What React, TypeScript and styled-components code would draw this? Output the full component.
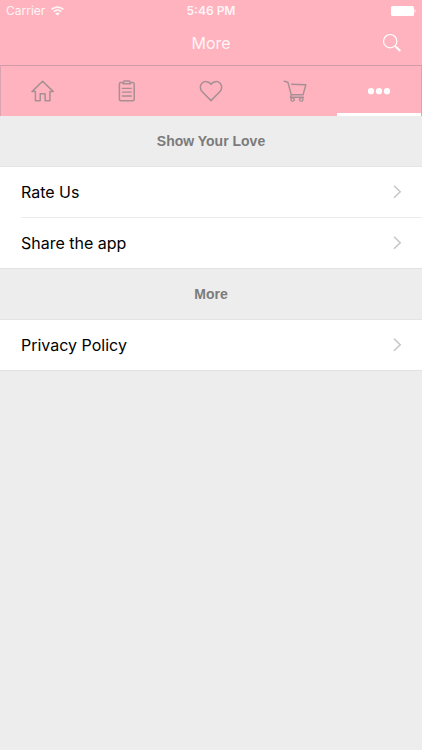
import React from "react";
import styled, { createGlobalStyle } from "styled-components";

const PINK = "#ffb3bf";
const PAGE = "#ededed";
const ICON = "#a78f94";

const GlobalStyle = createGlobalStyle`
  *, *::before, *::after { box-sizing: border-box; }
  body {
    margin: 0;
    background: ${PAGE};
    font-family: Inter, "Liberation Sans", sans-serif;
  }
`;

const Screen = styled.div`
  min-height: 100vh;
  background: ${PAGE};
`;

const StatusBar = styled.div`
  display: grid;
  grid-template-columns: 1fr auto 1fr;
  align-items: center;
  height: 22px;
  padding: 0 6px;
  background: ${PINK};
  color: #fff5f7;
  font-size: 12px;
  line-height: 16px;
`;

const Carrier = styled.span`
  display: flex;
  align-items: center;
  gap: 6px;
`;

const Clock = styled.time`
  font-weight: 600;
`;

const Battery = styled.span`
  display: flex;
  justify-content: flex-end;
`;

const TitleBar = styled.header`
  display: grid;
  grid-template-columns: 1fr auto 1fr;
  align-items: center;
  height: 43px;
  padding: 0 20px 2px;
  background: ${PINK};
`;

const Title = styled.h1`
  grid-column: 2;
  margin: 0;
  color: #fff5f7;
  font-size: 16px;
  line-height: 20px;
  font-weight: 400;
`;

const SearchButton = styled.button`
  justify-self: end;
  display: flex;
  padding: 0;
  border: 0;
  background: none;
  color: #fff;
  cursor: pointer;
`;

const Tabs = styled.nav`
  display: grid;
  grid-template-columns: repeat(5, 1fr);
  height: 51px;
  border: 1px solid #dda2af;
  border-top-color: #cf9ba7;
  border-bottom: 0;
  background: ${PINK};
`;

const Tab = styled.button<{ $active?: boolean }>`
  display: flex;
  align-items: center;
  justify-content: center;
  padding: 3px 0 0;
  border: 0;
  border-bottom: 3px solid ${(p) => (p.$active ? "#fff" : "transparent")};
  background: none;
  color: ${(p) => (p.$active ? "#fff" : ICON)};
  cursor: pointer;
`;

const SectionTitle = styled.h2`
  display: flex;
  align-items: center;
  justify-content: center;
  height: 51px;
  margin: 0;
  border-bottom: 1px solid #e4e4e5;
  color: #7b7b7b;
  font-family: "Liberation Sans", Arial, sans-serif;
  font-size: 14px;
  line-height: 20px;
  font-weight: 700;
`;

const List = styled.ul`
  margin: 0;
  padding: 0;
  list-style: none;
  background: #fff;
  border-bottom: 1px solid #e2e2e3;
`;

const Item = styled.li`
  & + &::before {
    content: "";
    display: block;
    height: 1px;
    margin-left: 21px;
    background: #ececec;
  }
`;

const Row = styled.a`
  display: flex;
  align-items: center;
  justify-content: space-between;
  height: 50px;
  padding: 0 20px 0 21px;
  color: #000;
  font-size: 16px;
  line-height: 20px;
  text-decoration: none;
`;

const WifiIcon = () => (
  <svg width="13" height="10" viewBox="0 0 13 10" fill="none" stroke="currentColor" strokeWidth="1.8" aria-hidden="true">
    <path d="M.6 3.4a8.6 8.6 0 0 1 11.8 0M2.7 5.7a5.5 5.5 0 0 1 7.6 0" />
    <path d="M6.5 9.7 4.3 7.6a3.2 3.2 0 0 1 4.4 0z" fill="currentColor" stroke="none" />
  </svg>
);

const BatteryIcon = () => (
  <svg width="25" height="10" viewBox="0 0 25 10" fill="#fff" role="img" aria-label="Battery full">
    <rect width="23" height="10" rx="1.5" />
    <path d="M23.6 3.3c1.4.3 1.4 3.1 0 3.4z" />
  </svg>
);

const SearchIcon = () => (
  <svg width="20" height="20" viewBox="0 0 20 20" fill="none" stroke="currentColor" aria-hidden="true">
    <circle cx="8.2" cy="8.2" r="6.7" strokeWidth="1.2" />
    <path d="m13 13 .8.8" strokeWidth="1.2" />
    <path d="m13.7 13.7 4.6 4.4" strokeWidth="2.1" />
  </svg>
);

const TabIcon = ({ children }: { children: React.ReactNode }) => (
  <svg width="24" height="24" viewBox="0 0 24 24" fill="none" stroke="currentColor" strokeWidth="1.5" strokeLinejoin="round" strokeLinecap="round" aria-hidden="true">
    {children}
  </svg>
);

const tabs = [
  {
    label: "Home",
    icon: <path d="M11.6 2.2 1 12.6h3.4v9.2h4.8v-7h4.9v7h4.8v-9.2h3.4z" />,
  },
  {
    label: "Orders",
    icon: (
      <>
        <path d="M8 3.4H5.9a1.5 1.5 0 0 0-1.5 1.5v15.4a1.5 1.5 0 0 0 1.5 1.5h11.8a1.5 1.5 0 0 0 1.5-1.5V4.9a1.5 1.5 0 0 0-1.5-1.5h-2.1" />
        <path d="M9.2 1.9h5.2l1.2 2.9H8z" />
        <path d="M7.3 9.3h9M7.3 13.1h9M7.3 17h9" strokeWidth="1.3" />
      </>
    ),
  },
  {
    label: "Favourites",
    icon: (
      <path d="M12 21.6 3 12.5C.8 10.2.8 6.5 2.9 4.3 5.4 1.8 9.8 2.1 12 5.2c2.2-3.1 6.6-3.4 9.1-.9 2.1 2.2 2.1 5.9-.1 8.2z" />
    ),
  },
  {
    label: "Cart",
    icon: (
      <g strokeWidth="1.4">
        <path d="M1.3 2.3l3.6.9 3.4 12.6-.9 2.5h13M8.6 5.2l14.2.6-2.7 9.9H8.3" />
        <circle cx="9.6" cy="20.4" r="1.7" />
        <circle cx="18.3" cy="20.4" r="1.7" />
      </g>
    ),
  },
  {
    label: "More",
    active: true,
    icon: (
      <g fill="currentColor" stroke="none">
        <circle cx="4" cy="12.2" r="3.1" />
        <circle cx="12" cy="12.2" r="3.1" />
        <circle cx="20" cy="12.2" r="3.1" />
      </g>
    ),
  },
];

const Chevron = () => (
  <svg width="9" height="14" viewBox="0 0 9 14" fill="none" stroke="#c7c7cc" strokeWidth="1.6" aria-hidden="true">
    <path d="m1 .8 6.2 6L1 12.8" />
  </svg>
);

const sections = [
  { title: "Show Your Love", items: ["Rate Us", "Share the app"] },
  { title: "More", items: ["Privacy Policy"] },
];

export default function App() {
  return (
    <Screen>
      <GlobalStyle />
      <StatusBar>
        <Carrier>
          Carrier
          <WifiIcon />
        </Carrier>
        <Clock>5:46 PM</Clock>
        <Battery>
          <BatteryIcon />
        </Battery>
      </StatusBar>
      <TitleBar>
        <Title>More</Title>
        <SearchButton type="button" aria-label="Search">
          <SearchIcon />
        </SearchButton>
      </TitleBar>
      <Tabs aria-label="Main">
        {tabs.map((tab) => (
          <Tab key={tab.label} type="button" aria-label={tab.label} $active={tab.active}>
            <TabIcon>{tab.icon}</TabIcon>
          </Tab>
        ))}
      </Tabs>
      <main>
        {sections.map((section) => (
          <section key={section.title}>
            <SectionTitle>{section.title}</SectionTitle>
            <List>
              {section.items.map((item) => (
                <Item key={item}>
                  <Row href="#">
                    {item}
                    <Chevron />
                  </Row>
                </Item>
              ))}
            </List>
          </section>
        ))}
      </main>
    </Screen>
  );
}
